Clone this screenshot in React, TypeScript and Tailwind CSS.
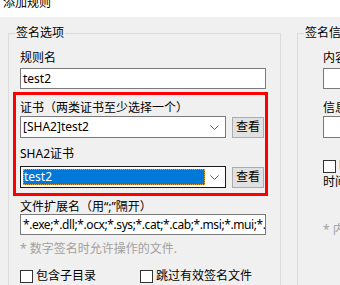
import React from 'react';

const Chevron = () => (
    <svg width="9" height="5" viewBox="0 0 9 5" className="shrink-0">
        <path d="M0.5 0.5 L4.5 4.5 L8.5 0.5" fill="none" stroke="#606060" strokeWidth="1" />
    </svg>
);

const Check = ({ label }: { label: string }) => (
    <div className="flex items-center gap-[3px] h-[16px]">
        <div className="w-[13px] h-[13px] border border-[#333333] bg-white shrink-0" />
        <span className="leading-[16px] whitespace-nowrap">{label}</span>
    </div>
);

const ViewButton = () => (
    <button className="w-[32px] h-[21px] border border-[#adadad] bg-[#e1e1e1] leading-[16px] text-[12px] flex items-center justify-center">
        查看
    </button>
);

export default function App() {
    return (
        <div className="w-[340px] h-[285px] overflow-hidden bg-[#f0f0f0] text-[12px] text-black font-['Noto_Sans','Noto_Sans_CJK_SC',sans-serif]">
            <div className="h-[17px] bg-white overflow-hidden">
                <div className="-mt-[5px] pl-[3px] leading-[16px]">添加规则</div>
            </div>

            <div className="flex gap-[16px] pl-[8px] pt-[8px]">
                {/* 签名选项 */}
                <fieldset className="w-[273px] min-w-0 shrink-0 border border-[#dcdcdc] pl-[11px] pr-[14px] h-[300px]">
                    <legend className="-ml-[5px] px-[1px] leading-[16px]">签名选项</legend>
                    <div className="pt-[9px]">
                        <div className="leading-[16px]">规则名</div>
                        <div className="mt-[2px] h-[21px] border border-[#7a7a7a] bg-white flex items-center pl-[2px] leading-[16px]">test2</div>

                        <div className="mt-[3px] -ml-[7px] -mr-[2px] border-[3px] border-[#ff0000] pl-[4px] pr-[1px] pt-[5px] pb-[5px]">
                            <div className="leading-[16px] whitespace-nowrap">证书（两类证书至少选择一个）</div>
                            <div className="flex items-center gap-[6px]">
                                <div className="w-[206px] h-[22px] border border-[#7a7a7a] bg-white flex items-center justify-between pl-[2px] pr-[6px]">
                                    <span className="leading-[16px]">[SHA2]test2</span>
                                    <Chevron />
                                </div>
                                <ViewButton />
                            </div>
                            <div className="mt-[8px] leading-[16px]">SHA2证书</div>
                            <div className="mt-[4px] flex items-center gap-[6px]">
                                <div className="w-[206px] h-[22px] border border-[#1a1a1a] bg-white flex items-center justify-between p-[2px] pr-[6px]">
                                    <div className="w-[182px] h-full bg-[#0078d7] text-white leading-[16px] pl-[1px] outline-1 outline-dotted outline-[#e0a040] -outline-offset-1">test2</div>
                                    <Chevron />
                                </div>
                                <ViewButton />
                            </div>
                        </div>

                        <div className="mt-[4px] leading-[14px] whitespace-nowrap">文件扩展名（用“;”隔开）</div>
                        <div className="h-[21px] border border-[#7a7a7a] bg-white flex items-center pl-[2px] leading-[16px] overflow-hidden whitespace-nowrap tracking-[-0.4px]">
                            *.exe;*.dll;*.ocx;*.sys;*.cat;*.cab;*.msi;*.mui;*.tlb
                        </div>
                        <div className="mt-[6px] leading-[16px] text-[#a0a0a0] whitespace-nowrap">* 数字签名时允许操作的文件.</div>
                        <div className="mt-[11px] flex">
                            <div className="w-[120px]">
                                <Check label="包含子目录" />
                            </div>
                            <Check label="跳过有效签名文件" />
                        </div>
                    </div>
                </fieldset>

                {/* 签名信息 */}
                <fieldset className="w-[200px] min-w-0 shrink-0 border border-[#dcdcdc] px-[11px] h-[300px]">
                    <legend className="-ml-[5px] px-[1px] leading-[16px] whitespace-nowrap">签名信息</legend>
                    <div className="pt-[9px] pl-[14px]">
                        <div className="leading-[16px]">内容</div>
                        <div className="mt-[2px] h-[21px] w-[160px] border border-[#7a7a7a] bg-white" />
                        <div className="mt-[11px] leading-[16px]">信息</div>
                        <div className="h-[22px] w-[160px] border border-[#7a7a7a] bg-white" />
                        <div className="mt-[20px]">
                            <Check label="时间戳" />
                        </div>
                        <div className="mt-0 leading-[16px] whitespace-nowrap">时间戳服务器</div>
                        <div className="mt-[32px] leading-[16px] text-[#a0a0a0] whitespace-nowrap">* 内容和信息为可选项.</div>
                    </div>
                </fieldset>
            </div>
        </div>
    );
}
